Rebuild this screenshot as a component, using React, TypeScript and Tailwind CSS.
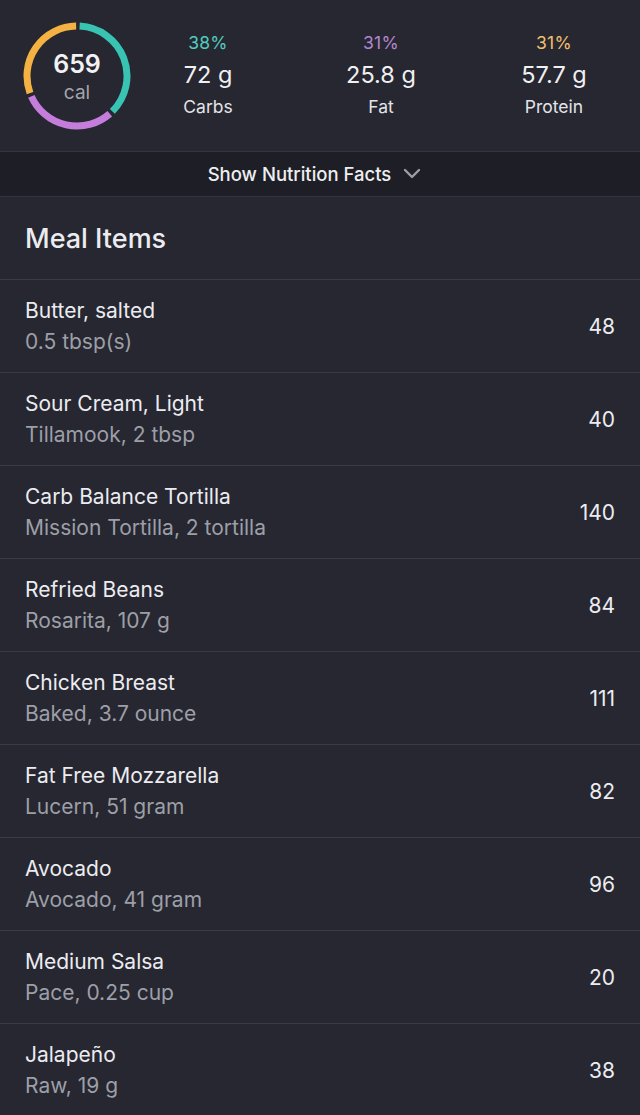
import React from "react";

type Item = { name: string; detail: string; cal: number };

const items: Item[] = [
  { name: "Butter, salted", detail: "0.5 tbsp(s)", cal: 48 },
  { name: "Sour Cream, Light", detail: "Tillamook, 2 tbsp", cal: 40 },
  { name: "Carb Balance Tortilla", detail: "Mission Tortilla, 2 tortilla", cal: 140 },
  { name: "Refried Beans", detail: "Rosarita, 107 g", cal: 84 },
  { name: "Chicken Breast", detail: "Baked, 3.7 ounce", cal: 111 },
  { name: "Fat Free Mozzarella", detail: "Lucern, 51 gram", cal: 82 },
  { name: "Avocado", detail: "Avocado, 41 gram", cal: 96 },
  { name: "Medium Salsa", detail: "Pace, 0.25 cup", cal: 20 },
  { name: "Jalapeño", detail: "Raw, 19 g", cal: 38 },
];

function arc(cx: number, cy: number, r: number, a0: number, a1: number) {
  const p = (a: number) => {
    const rad = ((a - 90) * Math.PI) / 180;
    return [cx + r * Math.cos(rad), cy + r * Math.sin(rad)];
  };
  const [x0, y0] = p(a0);
  const [x1, y1] = p(a1);
  const large = a1 - a0 > 180 ? 1 : 0;
  return `M ${x0} ${y0} A ${r} ${r} 0 ${large} 1 ${x1} ${y1}`;
}

function Ring() {
  return (
    <div className="relative w-[108px] h-[108px] shrink-0">
      <svg width="108" height="108" viewBox="0 0 108 108" className="absolute inset-0">
        <path d={arc(54, 54, 50, 3, 135)} stroke="#38c3b3" strokeWidth="7" fill="none" />
        <path d={arc(54, 54, 50, 139, 246)} stroke="#c57ddc" strokeWidth="7" fill="none" />
        <path d={arc(54, 54, 50, 250, 359)} stroke="#f4b242" strokeWidth="7" fill="none" />
      </svg>
      <div className="absolute inset-0 flex flex-col items-center justify-center pt-[4px]">
        <span className="text-[25px] leading-[30px] font-semibold text-[#f2f2f4]">659</span>
        <span className="text-[19px] leading-[28px] text-[#a3a5ad]">cal</span>
      </div>
    </div>
  );
}

function Macro({ pct, color, value, label }: { pct: string; color: string; value: string; label: string }) {
  return (
    <div className="flex flex-col items-center w-[120px]">
      <span className={`text-[17.5px] leading-[32px] tracking-[0.3px] ${color}`}>{pct}</span>
      <span className="text-[23.5px] leading-[32px] text-[#f0f0f2]">{value}</span>
      <span className="text-[17.5px] leading-[32px] text-[#e4e4e8]">{label}</span>
    </div>
  );
}

export default function App() {
  return (
    <div className="w-[640px] h-[1115px] overflow-hidden bg-[#262731] font-['Inter',sans-serif]">
      <div className="h-[151px] flex items-center pl-[23px] pr-[26px] pt-[1px]">
        <Ring />
        <div className="flex flex-1 justify-between ml-[17px] mt-[-3px]">
          <Macro pct="38%" color="text-[#52cbbd]" value="72 g" label="Carbs" />
          <Macro pct="31%" color="text-[#b584cf]" value="25.8 g" label="Fat" />
          <Macro pct="31%" color="text-[#efbe6b]" value="57.7 g" label="Protein" />
        </div>
      </div>
      <div className="h-[46px] bg-[#1d1e26] border-t border-b border-[#33343f] flex items-center justify-center gap-[12px] pr-[11px]">
        <span className="text-[18.5px] text-[#eeeef0] font-medium pt-[2px]">Show Nutrition Facts</span>
        <svg width="18" height="12" viewBox="0 0 18 12">
          <path d="M2 2 L9 9 L16 2" stroke="#9c9ea6" strokeWidth="2.4" fill="none" strokeLinecap="round" strokeLinejoin="round" />
        </svg>
      </div>
      <div className="h-[83px] flex items-center px-[25px] pt-[3px] border-b border-[#3a3b46]">
        <span className="text-[27px] font-medium text-[#ececf0]">Meal Items</span>
      </div>
      {items.map((it) => (
        <div key={it.name} className="h-[93px] flex items-center justify-between pl-[25px] pr-[25px] border-b border-[#393a45]">
          <div className="flex flex-col">
            <span className="text-[21px] leading-[28px] text-[#ececf0]">{it.name}</span>
            <span className="text-[21px] leading-[28px] mt-[3px] text-[#9d9fa7]">{it.detail}</span>
          </div>
          <span className="text-[21px] text-[#ececf0] pt-[2px]">{it.cal}</span>
        </div>
      ))}
    </div>
  );
}
